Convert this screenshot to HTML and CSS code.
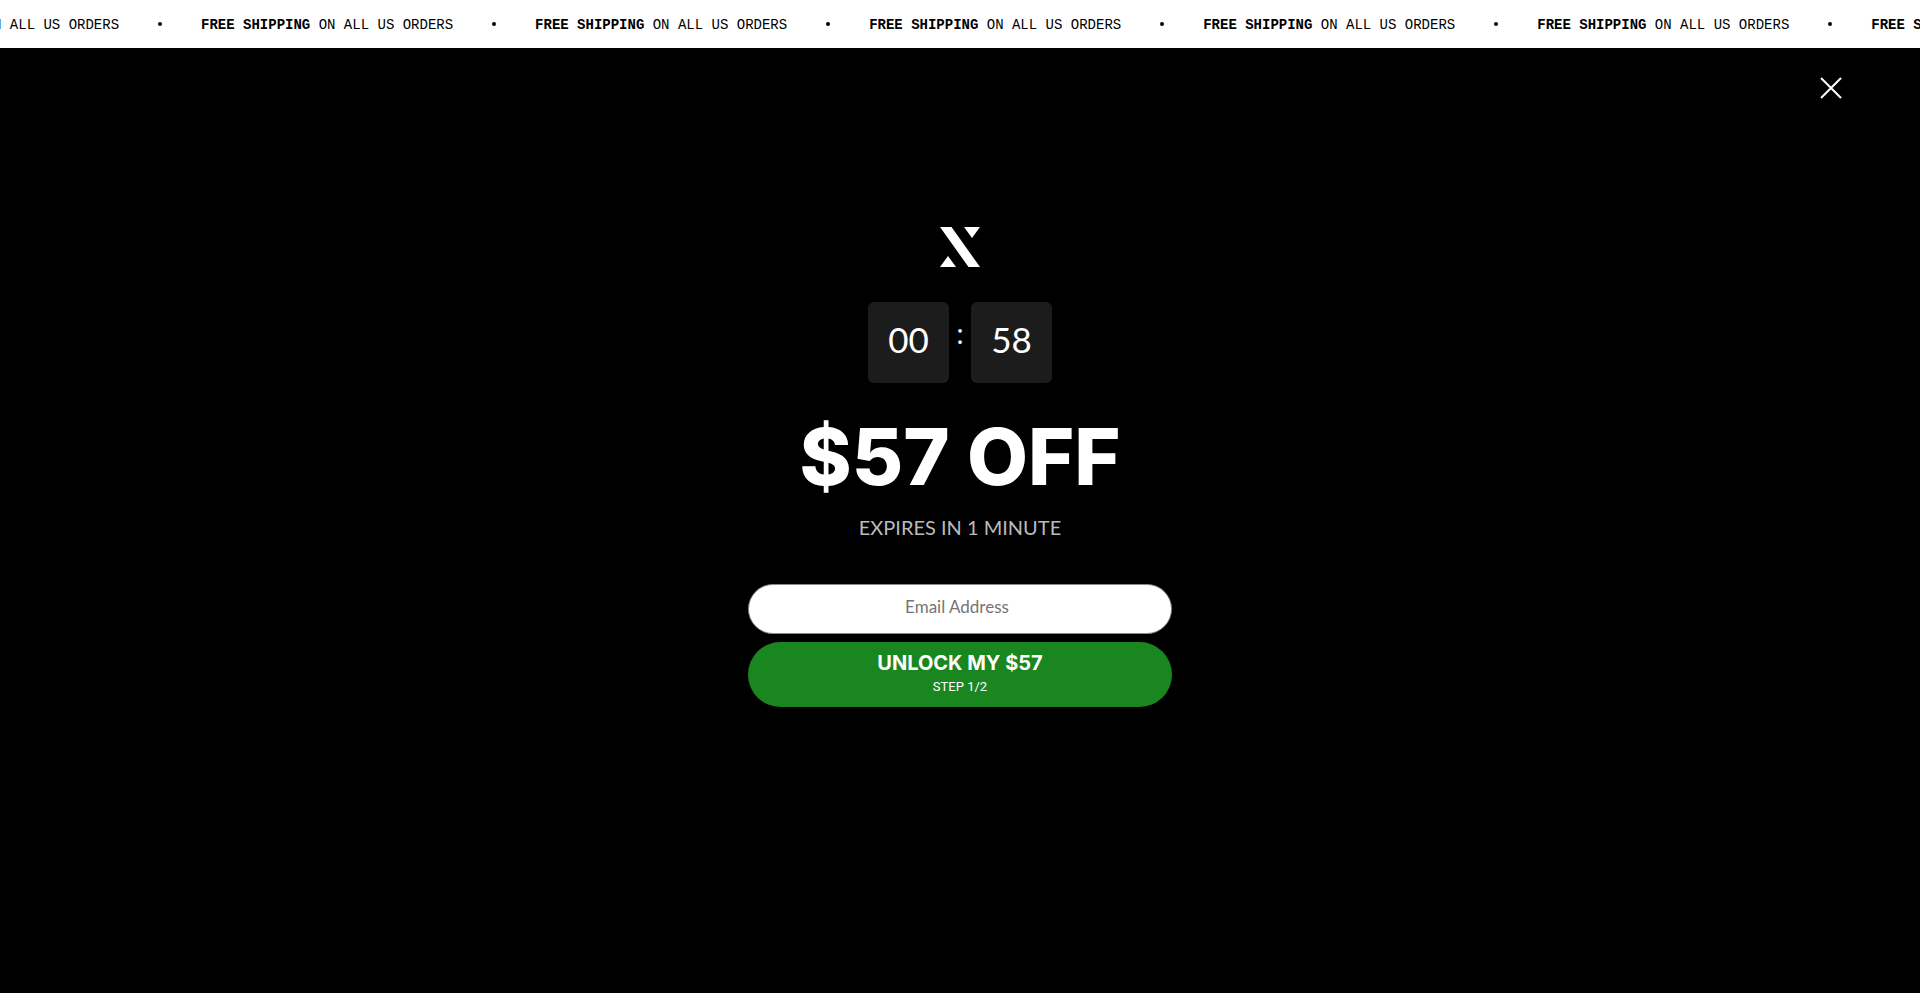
FILE: index.html
```html
<!DOCTYPE html>
<html lang="en">
<head>
  <meta charset="UTF-8" />
  <meta name="viewport" content="width=device-width, initial-scale=1.0"/>
  <title>$57 OFF</title>
  <link rel="stylesheet" href="styles.css">
</head>
<body>

  <div class="ticker">
    <div class="ticker-track">
      <span class="ticker-item"><b>FREE SHIPPING</b> ON ALL US ORDERS</span><span class="dot"></span>
      <span class="ticker-item"><b>FREE SHIPPING</b> ON ALL US ORDERS</span><span class="dot"></span>
      <span class="ticker-item"><b>FREE SHIPPING</b> ON ALL US ORDERS</span><span class="dot"></span>
      <span class="ticker-item"><b>FREE SHIPPING</b> ON ALL US ORDERS</span><span class="dot"></span>
      <span class="ticker-item"><b>FREE SHIPPING</b> ON ALL US ORDERS</span><span class="dot"></span>
      <span class="ticker-item"><b>FREE SHIPPING</b> ON ALL US ORDERS</span><span class="dot"></span>
      <span class="ticker-item"><b>FREE SHIPPING</b> ON ALL US ORDERS</span><span class="dot"></span>
    </div>
  </div>

  <main class="popup">
    <button type="button" class="close-btn" aria-label="Close">
      <svg width="22" height="22" viewBox="0 0 22 22" fill="none" stroke="#fff" stroke-width="2">
        <path d="M1 1L21 21M21 1L1 21"/>
      </svg>
    </button>

    <div class="popup-content">
      <svg class="logo" width="40" height="40" viewBox="0 0 40 40" fill="#fff">
        <path d="M0 0H11.500L40 40H28.500Z"/>
        <path d="M24 0H40L32 11Z"/>
        <path d="M0 40L8 29L16 40Z"/>
      </svg>

      <div class="timer">
        <div class="timer-box">00</div>
        <div class="timer-colon">:</div>
        <div class="timer-box">58</div>
      </div>

      <h1>$57 OFF</h1>
      <p class="expires">EXPIRES IN 1 MINUTE</p>

      <form class="signup">
        <input type="email" name="email" placeholder="Email Address" aria-label="Email Address">
        <button type="submit" class="submit-btn">
          <span class="submit-title">UNLOCK MY $57</span>
          <span class="submit-step">STEP 1/2</span>
        </button>
      </form>
    </div>
  </main>

</body>
</html>
```

FILE: styles.css
```css
body {
  font-family: Lato, sans-serif;
  background: #000;
  color: #fff;
  margin: 0;
}

.ticker {
  background: #fff;
  color: #000;
  overflow: hidden;
}

.ticker-track {
  display: flex;
  align-items: center;
  width: max-content;
  height: 48px;
  margin-left: -133px;
  font-family: "Liberation Mono", monospace;
  font-size: 14px;
  white-space: nowrap;
}

.ticker-item {
  padding-top: 2px;
}

.dot {
  width: 4px;
  height: 4px;
  margin: 0 39px;
  border-radius: 2px;
  background: #000;
}

.popup {
  display: flex;
  flex-direction: column;
  align-items: center;
}

.close-btn {
  align-self: flex-end;
  margin: 24px 73px 0 0;
  padding: 5px;
  border: none;
  background: none;
  cursor: pointer;
}

.close-btn svg {
  display: block;
}

.popup-content {
  display: flex;
  flex-direction: column;
  align-items: center;
  width: 100%;
  max-width: 424px;
  padding-top: 123px;
}

.timer {
  display: flex;
  margin-top: 35px;
}

.timer-box {
  width: 81px;
  height: 81px;
  border-radius: 6px;
  background: #1c1c1c;
  font-size: 35px;
  line-height: 74px;
  text-align: center;
}

.timer-colon {
  width: 22px;
  font-size: 28px;
  line-height: 62px;
  text-align: center;
}

h1 {
  margin: 25px 0 0;
  font-family: Inter, sans-serif;
  font-size: 79px;
  font-weight: 800;
  line-height: 96px;
}

.expires {
  margin: 11px 0 0;
  color: #bbb;
  font-size: 20px;
  line-height: 24px;
}

.signup {
  width: 100%;
  display: flex;
  flex-direction: column;
  gap: 8px;
  margin-top: 45px;
}

.signup input {
  box-sizing: border-box;
  width: 100%;
  height: 50px;
  padding: 0 26px 6px 20px;
  border: 1px solid #8a8a8a;
  border-radius: 25px;
  background: #fff;
  font-family: inherit;
  font-size: 17px;
  text-align: center;
}

.signup input::placeholder {
  color: #757575;
}

.submit-btn {
  display: flex;
  flex-direction: column;
  align-items: center;
  padding: 8px 20px 9px;
  border: none;
  border-radius: 33px;
  background: #198620;
  color: #fff;
  font-family: inherit;
  cursor: pointer;
}

.submit-title {
  font-family: Inter, sans-serif;
  font-size: 20px;
  font-weight: 700;
  line-height: 26px;
}

.submit-step {
  font-family: Roboto, sans-serif;
  font-size: 13px;
  line-height: 22px;
}
```
